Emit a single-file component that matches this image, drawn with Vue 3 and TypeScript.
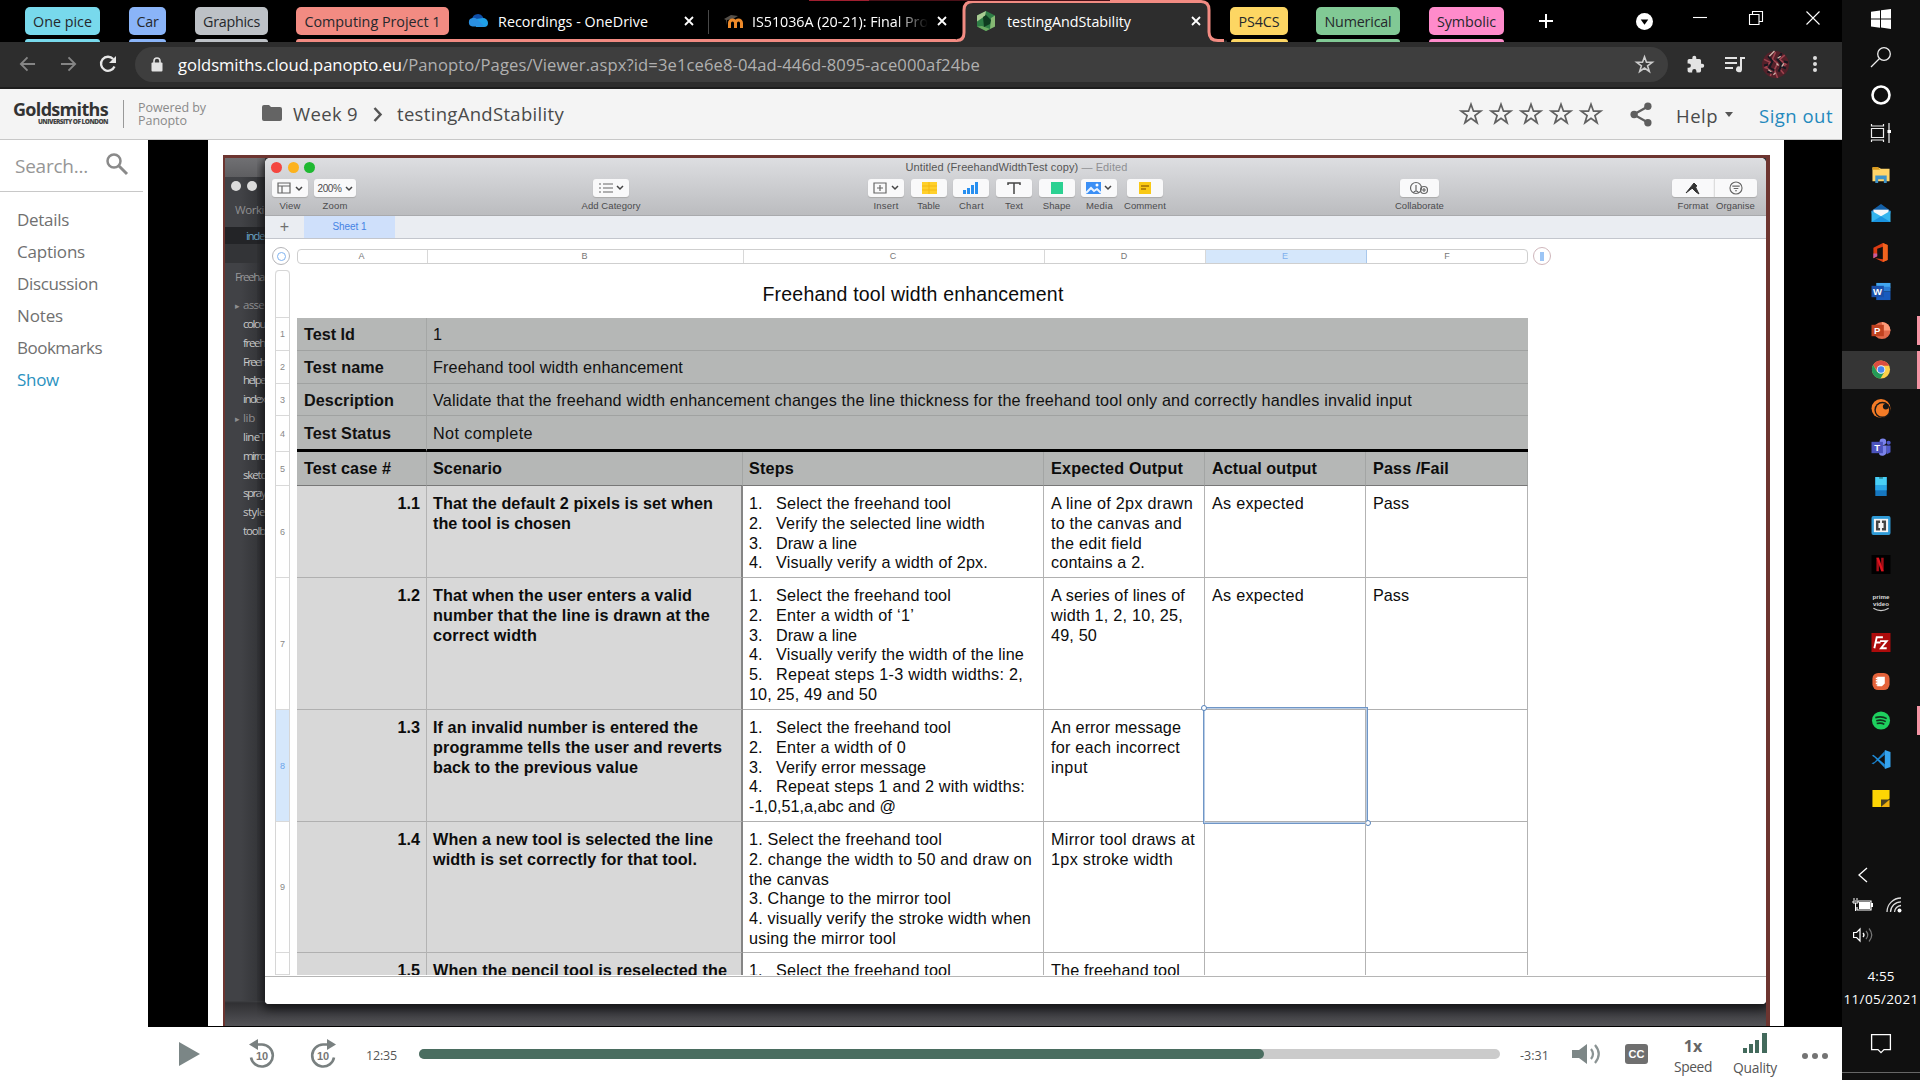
<script setup lang="ts">
import type { Directive } from 'vue'

// Tracks a line of text so that it fills the given width in pixels.
const vFit: Directive<HTMLElement, number | undefined> = {
  mounted(el, binding) {
    const target = binding.value
    const count = (el.textContent ?? '').length
    if (!target || !count) return
    const natural = el.getBoundingClientRect().width
    el.style.letterSpacing = `${((target - natural) / count).toFixed(3)}px`
  },
}

interface Line { t: string; w?: number; n?: string }
interface Row { h: number; id: string; scenario: Line[]; steps: Line[]; expected: Line[]; actual: Line[]; result: Line[] }

const menu = [
  { t: 'Details', w: 52 }, { t: 'Captions', w: 68 }, { t: 'Discussion', w: 81 },
  { t: 'Notes', w: 46 }, { t: 'Bookmarks', w: 85 }, { t: 'Show', w: 42 },
]

const files = ['colou', 'freeh', 'Freeh', 'helpe', 'index']
const files2 = ['lineT', 'mirro', 'sketc', 'spray', 'style', 'toolb']

const columns = [
  { t: 'A', w: 130 }, { t: 'B', w: 316 }, { t: 'C', w: 301 },
  { t: 'D', w: 161 }, { t: 'E', w: 161 }, { t: 'F', w: 162 },
]

const info = [
  { h: 33, k: 'Test Id', kw: 51, v: '1', vw: 8 },
  { h: 33, k: 'Test name', kw: 80, v: 'Freehand tool width enhancement', vw: 250 },
  { h: 32, k: 'Description', kw: 90, v: 'Validate that the freehand width enhancement changes the line thickness for the freehand tool only and correctly handles invalid input', vw: 979 },
  { h: 36, k: 'Test Status', kw: 87, v: 'Not complete', vw: 100 },
]

const heads = [
  { t: 'Test case #', w: 87 }, { t: 'Scenario', w: 69 }, { t: 'Steps', w: 45 },
  { t: 'Expected Output', w: 132 }, { t: 'Actual output', w: 105 }, { t: 'Pass /Fail', w: 76 },
]

const select: Line = { n: '1.', t: 'Select the freehand tool', w: 175 }
const expectedText: Line = { t: 'As expected', w: 92 }
const pass: Line = { t: 'Pass', w: 36 }

const cases: Row[] = [
  {
    h: 92, id: '1.1',
    scenario: [{ t: 'That the default 2 pixels is set when', w: 280 }, { t: 'the tool is chosen', w: 138 }],
    steps: [select, { n: '2.', t: 'Verify the selected line width', w: 209 }, { n: '3.', t: 'Draw a line', w: 81 }, { n: '4.', t: 'Visually verify a width of 2px.', w: 212 }],
    expected: [{ t: 'A line of 2px drawn', w: 142 }, { t: 'to the canvas and', w: 131 }, { t: 'the edit field', w: 91 }, { t: 'contains a 2.', w: 94 }],
    actual: [expectedText], result: [pass],
  },
  {
    h: 132, id: '1.2',
    scenario: [{ t: 'That when the user enters a valid', w: 259 }, { t: 'number that the line is drawn at the', w: 277 }, { t: 'correct width', w: 104 }],
    steps: [select, { n: '2.', t: 'Enter a width of ‘1’', w: 138 }, { n: '3.', t: 'Draw a line', w: 81 }, { n: '4.', t: 'Visually verify the width of the line', w: 248 }, { n: '5.', t: 'Repeat steps 1-3 width widths: 2,', w: 247 }, { t: '10, 25, 49 and 50', w: 128 }],
    expected: [{ t: 'A series of lines of', w: 134 }, { t: 'width 1, 2, 10, 25,', w: 132 }, { t: '49, 50', w: 46 }],
    actual: [expectedText], result: [pass],
  },
  {
    h: 112, id: '1.3',
    scenario: [{ t: 'If an invalid number is entered the', w: 265 }, { t: 'programme tells the user and reverts', w: 289 }, { t: 'back to the previous value', w: 205 }],
    steps: [select, { n: '2.', t: 'Enter a width of 0', w: 130 }, { n: '3.', t: 'Verify error message', w: 150 }, { n: '4.', t: 'Repeat steps 1 and 2 with widths:', w: 249 }, { t: '-1,0,51,a,abc and @', w: 147 }],
    expected: [{ t: 'An error message', w: 130 }, { t: 'for each incorrect', w: 129 }, { t: 'input', w: 37 }],
    actual: [], result: [],
  },
  {
    h: 131, id: '1.4',
    scenario: [{ t: 'When a new tool is selected the line', w: 280 }, { t: 'width is set correctly for that tool.', w: 264 }],
    steps: [{ t: '1. Select the freehand tool', w: 193 }, { t: '2. change the width to 50 and draw on', w: 283 }, { t: 'the canvas', w: 80 }, { t: '3. Change to the mirror tool', w: 202 }, { t: '4. visually verify the stroke width when', w: 282 }, { t: 'using the mirror tool', w: 147 }],
    expected: [{ t: 'Mirror tool draws at', w: 144 }, { t: '1px stroke width', w: 122 }],
    actual: [], result: [],
  },
  {
    h: 22, id: '1.5',
    scenario: [{ t: 'When the pencil tool is reselected the', w: 294 }],
    steps: [select], expected: [{ t: 'The freehand tool', w: 129 }], actual: [], result: [],
  },
]

const rowBar = [47, 33, 33, 32, 36, 34, 92, 132, 112, 131, 22]

const starPath = 'M12 2.2l2.5 7h7.3l-5.9 4.4 2.2 7.2-6.1-4.4-6.1 4.4 2.2-7.2L2.2 9.200h7.300z'
</script>

<template>
  <div class="screen">
    <div class="browser">
      <div class="tabs">
        <span class="chip cyan"><span v-fit="59">One pice</span></span>
        <span class="chip blue"><span v-fit="22">Car</span></span>
        <span class="chip grey"><span v-fit="57">Graphics</span></span>
        <span class="chip salmon"><span v-fit="136">Computing Project 1</span></span>
        <div class="tab one">
          <svg class="fav" viewBox="0 0 20 20"><path d="M4 8a6 6 0 0 1 11-2l1 3-9 6-4-4z" fill="#0f4fa8" /><path d="M8 8l7-1a5 5 0 0 1 5 5 4 4 0 0 1-4 4H8z" fill="#1fa0e8" /><path d="M4.500 7a5 5 0 0 1 5 1.500l7 7H4.500a4.300 4.300 0 0 1 0-8.500z" fill="#2a8fe0" /></svg>
          <span v-fit="150" class="tt">Recordings - OneDrive</span>
          <svg class="x" viewBox="0 0 10 10"><path d="M1 1l8 8M9 1L1 9" /></svg>
        </div>
        <div class="tab two">
          <svg class="fav" viewBox="0 0 20 20"><path d="M1 8l7-4 7 1-5 3-6 1v5l-1-5z" fill="#55504a" /><path d="M6.500 17v-5a3 3 0 0 1 6 0v5m0-5a3 3 0 0 1 6 0v5" fill="none" stroke="#ee8a2a" stroke-width="3" /></svg>
          <span class="tt fade"><span v-fit="176">IS51036A (20-21): Final Pro</span></span>
          <svg class="x" viewBox="0 0 10 10"><path d="M1 1l8 8M9 1L1 9" /></svg>
        </div>
        <div class="tab active">
          <svg class="shape" viewBox="0 0 270 42"><path d="M0 42V39.500q7 0 7-7V10Q7 1.500 16 1.500H244Q252 1.500 252 10V32q0 8.500 9 8.500h9V42z" fill="#2d2d2d" /><path d="M0 40.500q7 0 7-8V10Q7 1.500 16 1.500H244Q252 1.500 252 10V32q0 8.500 9 8.500h6" fill="none" stroke="#f28b82" stroke-width="3" /></svg>
          <svg class="fav" viewBox="0 0 20 20"><path d="M10 0l9 4.500v11L10 20l-9-4.500v-11z" fill="#2f7d46" /><path d="M10 0L1 4.500v6L9 5z" fill="#a9cc93" /><path d="M19 4.500v11L14 18l1-11z" fill="#86b873" /><path d="M1 15.500L10 20l4-2-8-3z" fill="#6cab63" /><path d="M7 6l3-2 5 5-1 4-6 3z" fill="#0f3b20" /></svg>
          <span v-fit="124" class="tt">testingAndStability</span>
          <svg class="x" viewBox="0 0 10 10"><path d="M1 1l8 8M9 1L1 9" /></svg>
        </div>
        <span class="chip yellow"><span v-fit="41">PS4CS</span></span>
        <span class="chip green"><span v-fit="67">Numerical</span></span>
        <span class="chip pink"><span v-fit="59">Symbolic</span></span>
        <svg class="plus" viewBox="0 0 16 16"><path d="M8 1v14M1 8h14" stroke="#fff" stroke-width="2" /></svg>
        <svg class="drop" viewBox="0 0 18 18"><circle cx="9" cy="9" r="9" fill="#fff" /><path d="M5 7h8l-4 5.500z" fill="#000" /></svg>
        <svg class="win" viewBox="0 0 14 14"><path d="M0 6.500h14" /></svg>
        <svg class="win" viewBox="0 0 14 14"><path d="M.5 3.500h9.500v10H.5zM3.500 3.500v-3h10v10H10" /></svg>
        <svg class="win" viewBox="0 0 14 14"><path d="M.5.5l13 13M13.500.5l-13 13" /></svg>
        <i class="streak dim"></i><i class="streak"></i>
      </div>

      <div class="toolbar">
        <svg class="nav" viewBox="0 0 18 16"><path d="M17 8H2M9 1L2 8l7 7" /></svg>
        <svg class="nav" viewBox="0 0 18 16"><path d="M1 8h15M9 1l7 7-7 7" /></svg>
        <svg class="nav bright" viewBox="0 0 18 18"><path d="M15.500 11.500a7 7 0 1 1-1.300-7.500" /><path d="M17 1v7h-7z" class="solid" /></svg>
        <div class="omni">
          <svg class="lock" viewBox="0 0 12 15"><path d="M3 6V4a3 3 0 0 1 6 0v2" fill="none" stroke="#e3e3e3" stroke-width="1.600" /><rect x=".5" y="5.500" width="11" height="9" rx="1" fill="#e3e3e3" /></svg>
          <span v-fit="224" class="host">goldsmiths.cloud.panopto.eu</span><span v-fit="578" class="path">/Panopto/Pages/Viewer.aspx?id=3e1ce6e8-04ad-446d-8095-ace000af24be</span>
          <svg class="fave" viewBox="0 0 24 24"><path :d="starPath" fill="none" stroke="#ccc" stroke-width="2" /></svg>
        </div>
        <svg class="ext" viewBox="0 0 24 24"><path fill="#e3e3e3" d="M20.500 11H19V7a2 2 0 0 0-2-2h-4V3.500a2.500 2.500 0 0 0-5 0V5H4a2 2 0 0 0-2 2v3.800h1.500a2.700 2.700 0 0 1 0 5.400H2V20a2 2 0 0 0 2 2h3.800v-1.500a2.700 2.700 0 0 1 5.400 0V22H17a2 2 0 0 0 2-2v-4h1.500a2.500 2.500 0 0 0 0-5z" /></svg>
        <svg class="queue" viewBox="0 0 20 17"><path d="M0 2h12M0 7h12M0 12h8" stroke="#e3e3e3" stroke-width="2" /><path d="M20 1h-5v9.500a3 3 0 1 0 2 3V3h3z" fill="#e3e3e3" /></svg>
        <svg class="avatar" viewBox="0 0 28 28"><circle cx="14" cy="14" r="13" fill="#54212a" /><path d="M3 9l6 3-5 5 7 2-2 6M14 2l-3 7 5 4-3 6 3 8M23 5l-5 4 6 5-6 4 4 5" fill="none" stroke="#a0434f" stroke-width="1.500" /><path d="M7 6l4 5-3 6 5 3M20 3l-4 6 4 5-3 7M3 15l4-1m15-3l4 1M6 21l5 1M19 15l5 3" fill="none" stroke="#161820" stroke-width="2" /><path d="M8 6l5-5m3 7l3-2m1 10l2-3M7 19l3 2M15 13l2 2M12 24l2-2" stroke="#d0b8ae" stroke-width="1.200" /></svg>
        <svg class="more" viewBox="0 0 4 18"><circle cx="2" cy="3" r="2" /><circle cx="2" cy="9" r="2" /><circle cx="2" cy="15" r="2" /></svg>
      </div>

      <header class="crumbs">
        <div class="logo"><b v-fit="95">Goldsmiths</b><small v-fit="70">UNIVERSITY OF LONDON</small></div>
        <div class="powered"><span v-fit="68">Powered by</span><span v-fit="49">Panopto</span></div>
        <svg class="folder" viewBox="0 0 20 16"><path d="M0 2q0-2 2-2h5l2 2h9q2 0 2 2v10q0 2-2 2H2q-2 0-2-2z" fill="#646464" /></svg>
        <span v-fit="65" class="crumb">Week 9</span>
        <svg class="sep" viewBox="0 0 9 15"><path d="M1.500 1l6 6.500-6 6.500" fill="none" stroke="#555" stroke-width="2.500" /></svg>
        <span v-fit="167" class="crumb">testingAndStability</span>
        <div class="stars">
          <svg v-for="n in 5" :key="n" viewBox="0 0 24 24"><path :d="starPath" fill="none" stroke="#606060" stroke-width="1.700" /></svg>
        </div>
        <svg class="share" viewBox="0 0 24 26"><path d="M20 4L4 13l16 9" fill="none" stroke="#5e5e5e" stroke-width="2.500" /><circle cx="19.500" cy="4" r="4" /><circle cx="4.500" cy="13" r="4" /><circle cx="19.500" cy="22" r="4" /></svg>
        <span v-fit="42" class="help">Help</span><i class="caret"></i>
        <span v-fit="74" class="sign">Sign out</span>
      </header>

      <div class="main">
        <aside class="side">
          <div class="search"><span v-fit="73">Search...</span>
            <svg viewBox="0 0 22 22"><circle cx="8" cy="8" r="6.500" fill="none" stroke="#8a8a8a" stroke-width="2.500" /><path d="M13 13l8 8" stroke="#8a8a8a" stroke-width="3" /></svg>
          </div>
          <nav><a v-for="m in menu" :key="m.t"><span v-fit="m.w">{{ m.t }}</span></a></nav>
        </aside>

        <div class="viewer">
          <div class="video">
            <div class="slide">
              <div class="frame">
                <div class="editor">
                  <div class="strip"></div>
                  <div class="dots"><i></i><i></i></div>
                  <div class="wf"><span v-fit="29">Worki</span></div>
                  <div class="cur"><span v-fit="18">inde</span></div>
                  <div class="band"></div>
                  <div class="proj"><span v-fit="29">Freeha</span></div>
                  <div class="file dir"><em>▸</em><span v-fit="21">asse</span></div>
                  <div v-for="f in files" :key="f" class="file"><span v-fit="22">{{ f }}</span></div>
                  <div class="file dir"><em>▸</em><span v-fit="12">lib</span></div>
                  <div v-for="f in files2" :key="f" class="file"><span v-fit="22">{{ f }}</span></div>
                </div>
                <div class="window">
                  <div class="titlebar">
                    <div class="titleline"><i class="r"></i><i class="y"></i><i class="g"></i><span v-fit="222" class="ttl">Untitled (FreehandWidthTest copy) <em>— Edited</em></span></div>
                    <div class="tools">
                      <div class="tool view"><div class="btn"><svg viewBox="0 0 26 12"><path d="M1 1h12v10H1zM1 4h12M5 4v7" class="ln" /><path d="M19 5l3 3 3-3" class="ch" /></svg></div><span v-fit="21">View</span></div>
                      <div class="tool zoom"><div class="btn"><b v-fit="24">200%</b><svg class="one-ch" viewBox="0 0 8 12"><path d="M1 5l3 3 3-3" class="ch" /></svg></div><span v-fit="25">Zoom</span></div>
                      <div class="tool cat"><div class="btn"><svg viewBox="0 0 26 12"><path d="M5 2h10M5 6h10M5 10h10M1 2h2M1 6h2M1 10h2" class="ln" /><path d="M19 4l3 3 3-3" class="ch" /></svg></div><span v-fit="59">Add Category</span></div>
                      <div class="tool ins"><div class="btn"><svg viewBox="0 0 26 12"><path d="M1 1h12v10H1zM7 3v6M4 6h6" class="ln" /><path d="M19 4l3 3 3-3" class="ch" /></svg></div><span v-fit="25">Insert</span></div>
                      <div class="tool"><div class="btn"><svg viewBox="0 0 26 12"><path d="M6 0h15v12H6z" fill="#ffd02b" /><path d="M6 4h15M6 8h15M13 0v12" stroke="#f3b815" /></svg></div><span v-fit="23">Table</span></div>
                      <div class="tool"><div class="btn"><svg viewBox="0 0 26 12"><path d="M5 8h3v4H5zM9 6h3v6H9zM13 3h3v9h-3zM17 0h3v12h-3z" fill="#278ff0" /></svg></div><span v-fit="25">Chart</span></div>
                      <div class="tool"><div class="btn"><svg viewBox="0 0 26 12"><path d="M7 3V1h12v2M13 1v11" fill="none" stroke="#444" stroke-width="1.500" /></svg></div><span v-fit="18">Text</span></div>
                      <div class="tool"><div class="btn"><svg viewBox="0 0 26 12"><path d="M7 0h12v12H7z" fill="#2bd192" /></svg></div><span v-fit="28">Shape</span></div>
                      <div class="tool"><div class="btn"><svg viewBox="0 0 26 12"><path d="M0 0h15v12H0z" fill="#3b8ff5" /><path d="M0 11l5-5 3 3 3-2 4 4" fill="none" stroke="#e7f2ff" stroke-width="2" /><circle cx="11" cy="3" r="1.500" fill="#fff" /><path d="M19 4l3 3 3-3" class="ch" /></svg></div><span v-fit="27">Media</span></div>
                      <div class="tool com"><div class="btn"><svg viewBox="0 0 26 12"><path d="M7 0h12v12H7z" fill="#f9c916" /><path d="M9 4h8M9 7h5" stroke="#a06f08" stroke-width="1.500" /></svg></div><span v-fit="42">Comment</span></div>
                      <div class="tool col"><div class="btn"><svg viewBox="0 0 26 12"><circle cx="10" cy="6" r="5.500" class="ln" /><path d="M10 3v6M7 11q3-4 6 0" class="ln" /><circle cx="18" cy="8" r="3.500" fill="#fff" class="ln" /><path d="M18 6v4M16 8h4" class="ln" /></svg></div><span v-fit="49">Collaborate</span></div>
                      <div class="tool fmt"><div class="btn"><svg viewBox="0 0 26 12"><path d="M6 11l8-10 3 3-6 3zM14 2l5 10-3-2-4-4z" fill="#333" stroke="#333" /></svg></div><span v-fit="31">Format</span></div>
                      <div class="tool org"><div class="btn"><svg viewBox="-1 -1 28 14"><circle cx="13" cy="6" r="6.500" class="ln" /><path d="M9 4h8M10.500 6.500h5M12 9h2" class="ln" /></svg></div><span v-fit="39">Organise</span></div>
                    </div>
                  </div>
                  <div class="sheets"><span class="add">+</span><span class="sheet"><span v-fit="34">Sheet 1</span></span></div>
                  <div class="canvas">
                    <div class="colrow">
                      <span class="knob"><i></i></span>
                      <div class="colbar"><span v-for="c in columns" :key="c.t" :class="{ on: c.t === 'E' }" :style="{ width: c.w + 'px' }">{{ c.t }}</span></div>
                      <span class="knob last"><i></i></span>
                    </div>
                    <div class="body">
                      <div class="rowbar"><span v-for="(h, i) in rowBar" :key="i" :class="{ on: i === 8 }" :style="{ height: h + 'px' }">{{ i > 0 && i < 10 ? i : '' }}</span></div>
                      <div class="table">
                        <div class="caption"><span v-fit="301">Freehand tool width enhancement</span></div>
                        <div v-for="r in info" :key="r.k" class="info" :style="{ height: r.h + 'px' }">
                          <div><b v-fit="r.kw">{{ r.k }}</b></div><div><span v-fit="r.vw">{{ r.v }}</span></div>
                        </div>
                        <div class="grid head"><div v-for="h in heads" :key="h.t"><b v-fit="h.w">{{ h.t }}</b></div></div>
                        <div v-for="c in cases" :key="c.id" class="grid case" :style="{ height: c.h + 'px' }">
                          <div class="id"><b>{{ c.id }}</b></div>
                          <div class="sc"><p v-for="l in c.scenario" :key="l.t"><b v-fit="l.w">{{ l.t }}</b></p></div>
                          <div><p v-for="l in c.steps" :key="l.t"><span v-if="l.n" class="num">{{ l.n }}</span><span v-fit="l.w">{{ l.t }}</span></p></div>
                          <div><p v-for="l in c.expected" :key="l.t"><span v-fit="l.w">{{ l.t }}</span></p></div>
                          <div class="act"><p v-for="l in c.actual" :key="l.t"><span v-fit="l.w">{{ l.t }}</span></p><div v-if="c.id === '1.3'" class="selection"><i></i><i></i></div></div>
                          <div><p v-for="l in c.result" :key="l.t"><span v-fit="l.w">{{ l.t }}</span></p></div>
                        </div>
                      </div>
                    </div>
                  </div>
                  <div class="foot"></div>
                </div>
              </div>
            </div>
          </div>

          <div class="player">
            <svg class="play" viewBox="0 0 21 24"><path d="M0 0l21 12L0 24z" fill="#7b8686" /></svg>
            <svg class="skip" viewBox="0 0 28 30"><path d="M8 5.500h6a11 11 0 1 1-11 13" fill="none" stroke="#798080" stroke-width="2.600" /><path d="M1 5.500L10 0v11z" fill="#798080" /><text x="14" y="21" text-anchor="middle">10</text></svg>
            <svg class="skip fwd" viewBox="0 0 28 30"><path d="M20 5.500h-6a11 11 0 1 0 11 13" fill="none" stroke="#798080" stroke-width="2.600" /><path d="M27 5.500L18 0v11z" fill="#798080" /><text x="14" y="21" text-anchor="middle">10</text></svg>
            <span v-fit="31" class="time">12:35</span>
            <div class="track"><i></i></div>
            <span v-fit="29" class="time left">-3:31</span>
            <svg class="vol" viewBox="0 0 29 22"><path d="M0 7h7l8-6v20l-8-6H0z" fill="#7d8787" /><path d="M19 6q4 5 0 10M23 2q7.500 9 0 18" fill="none" stroke="#8a9393" stroke-width="2.200" /></svg>
            <span class="cc">CC</span>
            <div class="opt"><b>1x</b><span v-fit="38">Speed</span></div>
            <div class="opt q"><svg viewBox="0 0 24 20"><path d="M0 15h4v5H0zM6 11h4v9H6zM12 7h4v13h-4zM19 0h5v20h-5z" fill="#436a5c" /></svg><span v-fit="44">Quality</span></div>
            <div class="dots3"><i></i><i></i><i></i></div>
          </div>
        </div>
      </div>
    </div>

    <div class="taskbar">
      <div class="slot sys"><svg viewBox="0 0 20 20"><path d="M0 2.800l9-1.300v8.100H0zM10 1.300L20 0v9.600H10zM0 10.600h9v8.100l-9-1.300zM10 10.600h10V20l-10-1.400z" fill="#fff" /></svg></div>
      <div class="slot sys"><svg viewBox="0 0 20 20"><circle cx="13" cy="7" r="6.300" fill="none" stroke="#eee" stroke-width="1.300" /><path d="M8.500 11.500L0 20" stroke="#eee" stroke-width="1.300" /></svg></div>
      <div class="slot sys"><svg viewBox="0 0 20 20"><circle cx="10" cy="10" r="8.500" fill="none" stroke="#fff" stroke-width="2.600" /></svg></div>
      <div class="slot sys"><svg viewBox="0 0 20 20"><path d="M.5 5.500h12v9H.5zM.5 1v2h12V1M.5 19v-2h12v2M18 0v20" fill="none" stroke="#eee" stroke-width="1.200" /><path d="M16.500 7h3.500v3h-3.500z" fill="#fff" /></svg></div>
      <div class="slot first"><svg viewBox="0 0 20 20"><path d="M1 3h7l2 1h9v13H1z" fill="#ffd56a" /><path d="M1 2h6l2 3H1z" fill="#d99a1f" /><path d="M4 19v-8h12v8h-3v-4H7v4z" fill="#3e93c9" /></svg></div>
      <div class="slot"><svg viewBox="0 0 20 20"><path d="M0 7l10-7 10 7v3H0z" fill="#1360a8" /><path d="M2 6h16v8H2z" fill="#f4f7fa" /><path d="M0 7l10 6 10-6v12H0z" fill="#35b5ee" /><path d="M0 19l10-6 10 6z" fill="#1a94e0" /></svg></div>
      <div class="slot"><svg viewBox="0 0 20 20"><path d="M2 5l10-5 5 2v16l-5 2-8-4 8 1V4L6 6v8l-4 2z" fill="#dc3b12" /><path d="M12 0l5 2v16l-5 2z" fill="#f0641e" /><path d="M2 11h4v3l-4 2z" fill="#c55b9f" /></svg></div>
      <div class="slot"><svg viewBox="0 0 20 20"><path d="M5 1h15v5H5z" fill="#41a5ee" /><path d="M5 5h15v5H5z" fill="#2b7cd3" /><path d="M5 10h15v9H5z" fill="#185abd" /><path d="M0 4h13v12H0z" fill="#1b4fa8" /><text x="6.300" y="13.500">W</text></svg></div>
      <div class="slot run"><svg viewBox="0 0 20 20"><circle cx="11" cy="10" r="9" fill="#e0694a" /><path d="M11 1a9 9 0 0 1 9 9h-9z" fill="#ff9a78" /><path d="M0 4h13v12H0z" fill="#c0411f" /><text x="6" y="13.500">P</text></svg></div>
      <div class="slot run current"><svg viewBox="0 0 20 20"><circle cx="10" cy="10" r="9.500" fill="#fdd04a" /><path d="M1.800 5A9.500 9.500 0 0 1 18.500 6H10l-4 6z" fill="#dc4e41" /><path d="M1.800 5A9.500 9.500 0 0 0 9.500 19.500l4-7H6z" fill="#249a58" /><circle cx="10" cy="10" r="4.500" fill="#eef3fb" /><circle cx="10" cy="10" r="3.500" fill="#4686ef" /></svg></div>
      <div class="slot"><svg viewBox="0 0 20 20"><circle cx="10" cy="10" r="10" fill="#f47b26" /><circle cx="11.500" cy="11.500" r="8.500" fill="#171717" /><circle cx="11.500" cy="11.500" r="7" fill="#f47b26" /><circle cx="15" cy="8" r="3" fill="#171717" /></svg></div>
      <div class="slot"><svg viewBox="0 0 20 20"><circle cx="12" cy="4" r="3.500" fill="#7b83eb" /><circle cx="18" cy="5" r="2.200" fill="#5059c9" /><path d="M8 8h8v6a4.500 4.500 0 0 1-8 3z" fill="#7b83eb" /><path d="M16 8h4v7l-4 2z" fill="#5059c9" /><path d="M0 4h12v12H0z" fill="#4b53bc" /><text x="6" y="13.500">T</text></svg></div>
      <div class="slot"><svg viewBox="0 0 20 20"><path d="M4 0h12v20H4z" fill="#1677c0" /><path d="M4 0h12v9H4z" fill="#49d0f6" /><path d="M4 9h12v5H4z" fill="#2aa6e6" /><path d="M8 1h4" stroke="#155" /></svg></div>
      <div class="slot"><svg viewBox="0 0 20 20"><rect y="0" width="20" height="20" rx="2" fill="#2f9ad6" /><path d="M2.500 3h15v14h-15z" fill="#f5f5f5" /><path d="M9 6H6v8h3M11 6h3v8h-3" fill="none" stroke="#444" stroke-width="2.600" /></svg></div>
      <div class="slot"><svg viewBox="0 0 20 20"><path d="M0 0h20v20H0z" fill="#000" /><path d="M6.500 3v14M11.500 3v14" stroke="#a80d16" stroke-width="2.600" /><path d="M5.200 3h2.600l5 14h-2.600z" fill="#e0131e" /></svg></div>
      <div class="slot"><svg viewBox="0 0 20 20"><g class="prime"><text x="10" y="5.500">prime</text><text x="10" y="12.500">video</text></g><path d="M2 15q8 5 16 0" fill="none" stroke="#ccc" stroke-width="1.300" /></svg></div>
      <div class="slot"><svg viewBox="0 0 20 20"><path d="M0 0h20v20H0z" fill="#ad0b0b" /><path d="M12 4.500H5.500L3 16M4.500 10h5M9 8.500h7l-6 7.500h6" fill="none" stroke="#fff" stroke-width="2" /></svg></div>
      <div class="slot"><svg viewBox="0 0 20 20"><rect x="1" y="1" width="18" height="18" rx="6" fill="#e4623a" /><path d="M6 5h8v7l-3 3H6z" fill="#fff" /><path d="M5.500 6v8" stroke="#fff" stroke-dasharray="1.500 1" stroke-width="2" /></svg></div>
      <div class="slot run"><svg viewBox="0 0 20 20"><circle cx="10" cy="10" r="9.500" fill="#1ed05e" /><path d="M4 7q7-2 12 1M5 10.200q6-1.600 10 1M5.500 13.200q5-1.200 8 .8" fill="none" stroke="#10331c" stroke-width="1.700" /></svg></div>
      <div class="slot"><svg viewBox="0 0 20 20"><path d="M14 1L3 12.500 0 14l2 1L14 5z" fill="#1a7fc9" /><path d="M14 19L3 7.500.5 6 2 5l12 10z" fill="#1f8ddb" /><path d="M14 0l6 2v16l-6 2z" fill="#35a4ef" /></svg></div>
      <div class="slot"><svg viewBox="0 0 20 20"><path d="M1 1h18v9l-9 9H1z" fill="#fdd504" /><path d="M10 19v-8h9z" fill="#4a4122" /><path d="M10 19l9-8v8z" fill="#f0b010" /></svg></div>
      <svg class="chev" viewBox="0 0 10 16"><path d="M9 1L1 8l8 7" fill="none" stroke="#fff" stroke-width="1.300" /></svg>
      <div class="tray">
        <svg viewBox="0 0 20 14"><path d="M5 3h13v9H4V9" fill="none" stroke="#fff" stroke-width="1.200" /><path d="M6 4h11v7H6zM18 5h2v4h-2z" fill="#fff" /><path d="M1 0v2M4 0v2M0 3h5v2H0zM2.500 5v8" stroke="#fff" fill="none" /></svg>
        <svg class="wifi" viewBox="0 0 16 16"><path d="M1 15A14 14 0 0 1 15 1M4.500 15A10.500 10.500 0 0 1 15 4.800M8.500 15A7 7 0 0 1 15 8.500" fill="none" stroke="#ddd" stroke-width="1.300" /><circle cx="13.500" cy="13.500" r="2" fill="#fff" /></svg>
      </div>
      <svg class="spk" viewBox="0 0 20 16"><path d="M.6 5.500h3L7 2v12l-3.400-3.500h-3z" fill="none" stroke="#fff" stroke-width="1.200" /><path d="M10 6q2 2 0 4" fill="none" stroke="#fff" stroke-width="1.300" /><path d="M13 4q3.500 4 0 8M16 1.500q5.500 6.500 0 13" fill="none" stroke="#777" stroke-width="1.200" /></svg>
      <div class="clock"><span v-fit="27">4:55</span><span v-fit="75">11/05/2021</span></div>
      <svg class="note" viewBox="0 0 20 20"><path d="M.6.6h18.800v15H13l-3 3-3-3H.6z" fill="none" stroke="#fff" stroke-width="1.300" /></svg>
      <i class="edge"></i>
    </div>
  </div>
</template>

<style>
html, body { margin: 0; background: #fff; overflow: hidden; }
</style>

<style scoped>
* { box-sizing: border-box; }
.screen { display: flex; width: 1920px; height: 1080px; overflow: hidden; font-family: "Open Sans", "Noto Sans", sans-serif; white-space: nowrap; }
.screen svg { display: block; flex: none; overflow: visible; }
.screen span, .screen b { display: inline-block; flex: none; }
i { display: block; flex: none; }
em { font-style: normal; }
p { margin: 0; }
.browser { display: flex; flex-direction: column; width: 1842px; height: 1080px; }

.tabs { position: relative; display: flex; height: 42px; background: #000; font-size: 14.3px; color: #fff; }
.screen .chip { display: flex; justify-content: center; align-items: center; height: 28px; margin-top: 7px; border-radius: 5px; color: #25282c; position: relative; }
.chip::after { content: ""; position: absolute; left: 0; right: 0; top: 32px; height: 3px; background: inherit; border-radius: 3px 3px 0 0; }
.cyan { width: 75px; margin-left: 25px; background: #78d9ec; }
.blue { width: 37px; margin-left: 29px; background: #8ab4f8; }
.grey { width: 73px; margin-left: 29px; background: #bdc1c6; }
.salmon { width: 153px; margin-left: 28px; background: #f28b82; }
.salmon::after { right: -509px; }
.yellow { width: 58px; margin-left: 14px; background: #fdd663; }
.yellow::after { left: 1px; }
.green { width: 84px; margin-left: 28px; background: #81c995; }
.pink { width: 75px; margin-left: 29px; background: #ff8bcb; }
.tab { display: flex; align-items: center; height: 42px; position: relative; }
.fav { width: 20px; height: 20px; position: relative; }
.tt { position: relative; margin-left: 10px; }
.tab .x { width: 10px; height: 10px; position: relative; stroke: #fff; stroke-width: 1.8; }
.tab.one { width: 240px; margin-left: 19px; }
.one .x { margin-left: 36px; }
.one::after { content: ""; position: absolute; right: -1px; top: 10px; height: 24px; width: 1px; background: #484848; }
.tab.two { width: 250px; padding-left: 15px; }
.tab .fade { width: 176px; overflow: hidden; -webkit-mask-image: linear-gradient(90deg, #000 82%, transparent); mask-image: linear-gradient(90deg, #000 82%, transparent); }
.two .tt { margin-left: 9px; }
.two .x { margin-left: 9px; }
.tab.active { width: 258px; padding-left: 18px; }
.active .shape { position: absolute; left: -1px; top: 0; width: 270px; height: 42px; }
.active .tt { margin-left: 11px; }
.active .x { margin-left: 60px; }
.plus { width: 16px; height: 16px; margin: 13px 0 0 34px; }
.drop { width: 17px; height: 17px; margin: 13px 0 0 82px; }
.win { width: 14px; height: 14px; margin: 11px 0 0 42px; stroke: #fff; fill: none; stroke-width: 1.1; }
.drop + .win { margin-left: 40px; }
.win:nth-last-of-type(1) { margin-left: 43px; }
.streak { position: absolute; top: 0; left: 809px; width: 60px; height: 1px; background: #a01f30; }
.streak.dim { width: 301px; background: #4a1018; }

.toolbar { display: flex; align-items: center; height: 47px; padding-bottom: 1px; background: #2d2d2d; border-bottom: 2px solid #1d1d1d; }
.nav { width: 17px; height: 16px; margin-left: 24px; fill: none; stroke: #858585; stroke-width: 2; }
.nav:first-child { margin-left: 19px; }
.bright { width: 18px; height: 18px; stroke: #e6e6e6; stroke-width: 2.3; margin-left: 22px; }
.bright .solid { fill: #e6e6e6; stroke: none; }
.omni { display: flex; align-items: center; width: 1533px; height: 35px; margin-left: 18px; padding-left: 16px; border-radius: 18px; background: #3e3e3e; font-size: 16.600px; }
.lock { width: 12px; height: 15px; margin-right: 15px; }
.host { color: #fff; }
.path { color: #b0b0b0; }
.fave { width: 19px; height: 19px; margin-left: auto; margin-right: 14px; }
.ext { width: 19px; height: 19px; margin-left: 18px; }
.queue { width: 20px; height: 17px; margin-left: 20px; }
.avatar { width: 29px; height: 29px; margin-left: 16px; }
.more { width: 4px; height: 18px; margin-left: 23px; fill: #ddd; }

.crumbs { display: flex; align-items: center; height: 51px; background: #f4f4f4; border-bottom: 1px solid #c8c8c8; color: #4a4a4a; }
.logo { display: flex; flex-direction: column; align-items: flex-end; width: 108px; height: 28px; color: #333; }
.logo b { font: 700 18px/18px "Open Sans", sans-serif; }
.logo small { font: 800 6.500px/8px "Open Sans", sans-serif; color: #444; }
.powered { display: flex; flex-direction: column; align-items: flex-start; margin-left: 15px; padding-left: 14px; border-left: 1px solid #999; height: 28px; justify-content: center; font-size: 12.500px; line-height: 13px; color: #8a8a8a; }
.folder { width: 20px; height: 16px; margin-left: 56px; margin-bottom: 2px; }
.crumb { font-size: 18.500px; line-height: 24px; }
.folder + .crumb { margin-left: 11px; }
.sep { width: 9px; height: 15px; margin: 0 15px 0 15px; }
.stars { display: flex; gap: 6px; margin-left: auto; }
.stars svg { width: 24px; height: 24px; }
.share { width: 22px; height: 25px; margin-left: 27px; fill: #5e5e5e; }
.help { font-size: 18.500px; margin: 2px 0 0 24px; }
.caret { margin-left: 7px; border: 4.500px solid transparent; border-top: 5px solid #555; border-bottom: 0; }
.sign { font-size: 18.500px; color: #2489bd; margin: 2px 9px 0 26px; }

.main { display: flex; flex: 1; min-height: 0; }
.side { width: 148px; }
.search { display: flex; align-items: center; width: 143px; height: 52px; padding: 1px 0 0 15px; border-bottom: 1px solid #c8c8c8; color: #969696; font-size: 19px; }
.search svg { width: 22px; height: 22px; margin: -4px 0 0 18px; }
nav { padding: 12px 0 0 17px; }
nav a { display: flex; align-items: center; height: 31.900px; font-size: 17px; color: #707070; }
nav a:last-child { color: #2b92c0; }

.viewer { display: flex; flex-direction: column; width: 1694px; }
.video { height: 887px; padding: 0 58px 1px 60px; background: #000; }
.slide { display: flex; height: 886px; padding: 15px 14px 0 15px; background: #fff; }
.frame { display: flex; width: 1547px; height: 871px; border: 2px solid #6d3530; border-width: 3px 4px 0 2px; background: linear-gradient(#3f4043 0 843px, #303033 845px, #58585c 871px); font-family: "Liberation Sans", Arial, sans-serif; }
.editor { width: 40px; height: 843px; overflow: hidden; background: linear-gradient(90deg, #414246 40%, #303134); color: #c7c7c7; font: 11.500px/17px "Open Sans", sans-serif; }
.strip { height: 19px; background: linear-gradient(#707073, #5e5e61); }
.dots { display: flex; gap: 6px; padding: 4px 0 0 6px; height: 24px; }
.dots i { width: 10px; height: 10px; border-radius: 50%; background: #dcdcdc; }
.wf { height: 26px; padding-left: 10px; color: #8f8f91; }
.cur { height: 17px; line-height: 17px; padding-left: 21px; background: #232427; color: #6ba6c8; }
.band { height: 19px; background: #333437; }
.proj { height: 33px; line-height: 28px; padding-left: 10px; color: #98989a; }
.file { height: 18.850px; padding-left: 18px; }
.dir { padding-left: 10px; color: #8e8e90; }
.dir em { display: inline-block; width: 8px; font-size: 9px; }
.window { display: flex; flex-direction: column; width: 1501px; height: 846px; background: #fff; border-radius: 5px 5px 4px 4px; overflow: hidden; box-shadow: 0 3px 10px 2px #161618; clip-path: inset(0 0 -24px -8px); }
.titlebar { height: 58px; background: linear-gradient(#dddee1, #bbbcbf); border-bottom: 1px solid #a9aaad; }
.titleline { display: flex; align-items: center; height: 18px; padding-left: 6px; font-size: 11px; color: #555; }
.titleline i { width: 11px; height: 11px; margin-right: 5.500px; border-radius: 50%; }
.r { background: #f4463f; } .y { background: #fcb21d; } .g { background: #1fb931; }
.ttl { margin-left: 585px; }
.ttl em { color: #8f9093; }
.tools { display: flex; padding-top: 3px; }
.tool { display: flex; flex-direction: column; align-items: center; width: 36px; margin-left: 6.700px; font-size: 9.500px; color: #4b4b4d; }
.tool > span { line-height: 11px; margin-top: 3px; }
.btn { display: flex; justify-content: center; align-items: center; width: 100%; height: 18px; border-radius: 3px; background: #f9f9fa; box-shadow: 0 1px 1px #aaa; }
.btn svg { width: 26px; height: 12px; }
.btn b { font-weight: 400; font-size: 10px; }
.screen .one-ch { width: 8px; margin-left: 3px; }
.ln { fill: none; stroke: #666; stroke-width: 1.200; }
.ch { fill: none; stroke: #444; stroke-width: 1.500; }
.view { margin-left: 7px; }
.zoom { width: 42px; margin-left: 6px; }
.cat { margin-left: 237px; }
.ins { margin-left: 239px; }
.com { margin-left: 9.500px; }
.col { width: 39px; margin-left: 237px; }
.fmt { width: 42px; margin-left: 233px; }
.fmt .btn { border-radius: 3px 0 0 3px; }
.org { width: 43px; margin-left: 0; }
.org .btn { border-radius: 0 3px 3px 0; border-left: 1px solid #ddd; }
.org .btn svg { height: 14px; }
.sheets { display: flex; align-items: center; height: 23px; background: #eaedf2; border-bottom: 1px solid #c3c6cd; font-size: 10px; }
.screen .add { width: 39px; text-align: center; font-size: 16px; line-height: 20px; color: #707070; }
.screen .sheet { width: 91px; height: 22px; line-height: 22px; text-align: center; background: #cfe0fb; color: #4683e4; }
.canvas { height: 737px; padding-top: 8px; overflow: hidden; }
.colrow { display: flex; align-items: center; height: 18px; margin-bottom: 6px; padding-left: 7px; }
.screen .knob { display: flex; align-items: center; justify-content: center; width: 18px; height: 18px; border: 1px solid #b4b4b8; border-radius: 50%; }
.knob i { width: 9px; height: 9px; border: 1.500px solid #7fb2ef; border-radius: 50%; }
.screen .last { border-color: #cfb6bb; margin-left: 5px; }
.last i { width: 4px; border: 0; border-radius: 0; background: #9cc5f5; }
.colbar { display: flex; width: 1231px; height: 15px; margin-left: 7px; border: 1px solid #cfcfcf; border-radius: 4px; overflow: hidden; }
.colbar span { height: 13px; padding-right: 2px; text-align: center; font-size: 9px; line-height: 13px; color: #777; border-right: 1px solid #d8d8d8; }
.colbar .on { background: #d5e7fb; color: #7fb0ec; border-color: #a9c8ec; }
.colbar span:last-child { border: 0; }
.body { display: flex; padding-left: 10px; }
.rowbar { display: flex; flex-direction: column; width: 15px; border: 1px solid #d6d6d6; border-width: 0 1px; border-radius: 4px 4px 0 0; box-shadow: 0 -1px #d6d6d6; }
.screen .rowbar span { display: flex; align-items: center; justify-content: center; font-size: 9px; color: #888; border-bottom: 1px solid #d9d9d9; }
.screen .rowbar .on { background: #d5e7fb; color: #6ba4ea; }
.table { width: 1231px; margin-left: 7px; font-size: 16.200px; line-height: 19.750px; color: #0c0c0c; }
.caption { display: flex; align-items: center; justify-content: center; height: 47px; padding-left: 1px; font-size: 19.500px; }
.info { display: grid; grid-template-columns: 130px 1101px; background: #b5b7b6; color: #111; }
.info > div { display: flex; align-items: center; padding: 2px 0 0 7px; border-bottom: 1px solid #a0a2a1; }
.info > div:first-child { border-right: 1px solid #a5a7a6; }
.info > div + div { padding-left: 6px; }
.info:nth-child(5) > div { border-bottom: 3px solid #000; }
.grid { display: grid; grid-template-columns: 130px 316px 301px 161px 161px 162px; }
.grid > div { padding-left: 7px; border-right: 1px solid #b3b3b3; border-bottom: 1px solid #b0b0b0; }
.grid > div:nth-child(2), .grid > div:nth-child(3) { padding-left: 6px; }
.head { height: 34px; background: #b5b7b6; }
.head > div { display: flex; align-items: center; border-right-color: #a3a5a4; border-bottom-color: #777; }
.case > div { padding-top: 8px; }
.case:last-child { overflow: hidden; }
.case > .id { padding-right: 6px; text-align: right; background: #d8d8d8; }
.case > .sc { background: #d8d8d8; border-right: 2px solid #858585; }
.case p { height: 19.750px; }
.screen .num { width: 27px; }
.case .act { position: relative; }
.selection { position: absolute; left: -2px; top: -3px; right: -3px; bottom: -3px; border: 1.500px solid #6f96c7; outline: 1px solid #b9cce4; outline-offset: -2px; }
.selection i { position: absolute; left: -3px; top: -3px; width: 6px; height: 6px; border: 1px solid #5582bb; border-radius: 50%; background: #fff; }
.selection i + i { left: auto; top: auto; right: -4px; bottom: -3px; }
.foot { height: 28px; border-top: 1px solid #b5b5b5; background: #fff; }

.player { display: flex; align-items: center; height: 53px; padding-left: 31px; background: #fff; color: #555; }
.play { width: 21px; height: 24px; margin-top: 1px; }
.skip { width: 28px; height: 30px; margin-left: 48px; margin-top: 0; }
.skip.fwd { margin-left: 33px; }
.skip text { font: 700 11px "Liberation Sans", sans-serif; fill: #777; }
.time { font-size: 12.500px; margin-left: 29px; margin-top: 3px; }
.track { width: 1081px; height: 10px; margin-left: 22px; border-radius: 5px; background: #cbcbcb; margin-top: 1px; }
.track i { width: 845px; height: 10px; border-radius: 5px; background: #4a6d60; }
.time.left { margin-left: 20px; }
.vol { width: 29px; height: 22px; margin-left: 23px; }
.screen .cc { width: 23px; height: 20px; margin: 0 0 0 24px; border-radius: 3px; background: #6f6f6f; color: #fff; font: 700 11px/20px "Liberation Sans", sans-serif; text-align: center; }
.opt { display: flex; flex-direction: column; align-items: center; width: 44px; height: 53px; margin-left: 23px; padding-top: 8px; font-size: 13.800px; line-height: 20px; }
.opt b { font-size: 16px; line-height: 22px; color: #666; }
.opt.q { margin-left: 18px; padding-top: 6px; }
.q svg { width: 24px; height: 20px; margin-bottom: 5px; }
.dots3 { display: flex; gap: 4px; margin: 5px 0 0 25px; }
.dots3 i { width: 6px; height: 6px; border-radius: 50%; background: #747474; }

.taskbar { display: flex; flex-direction: column; width: 78px; height: 1080px; background: #101010; color: #fff; }
.slot { display: flex; align-items: center; justify-content: center; height: 39px; border-right: 3px solid transparent; padding-left: 3px; }
.slot.sys { height: 38px; }
.slot.first { margin-top: 3px; }
.slot svg { width: 20px; height: 20px; }
.slot:not(.sys) svg { height: 19px; }
.run { height: 29px; margin: 5px 0; border-right-color: #f494a4; }
.run.current { height: 38px; margin: .5px 0; background: #353535; }
.slot text { font: 700 10px "Liberation Sans", sans-serif; fill: #fff; text-anchor: middle; }
.slot .prime text { font-size: 6.500px; fill: #ddd; }
.chev { width: 10px; height: 16px; margin: 49px 0 0 16px; }
.tray { display: flex; align-items: center; height: 16px; margin: 14px 0 0 11px; }
.tray svg { width: 20px; height: 14px; }
.screen .tray .wifi { width: 16px; height: 16px; margin-left: 13px; }
.spk { width: 20px; height: 16px; margin: 14px 0 0 11px; }
.clock { display: flex; flex-direction: column; align-items: center; margin-top: 22px; font-size: 13.500px; line-height: 22.500px; }
.note { width: 20px; height: 20px; margin: 24px 0 0 29px; }
.edge { height: 1px; margin-top: 18px; background: #666; }
</style>
